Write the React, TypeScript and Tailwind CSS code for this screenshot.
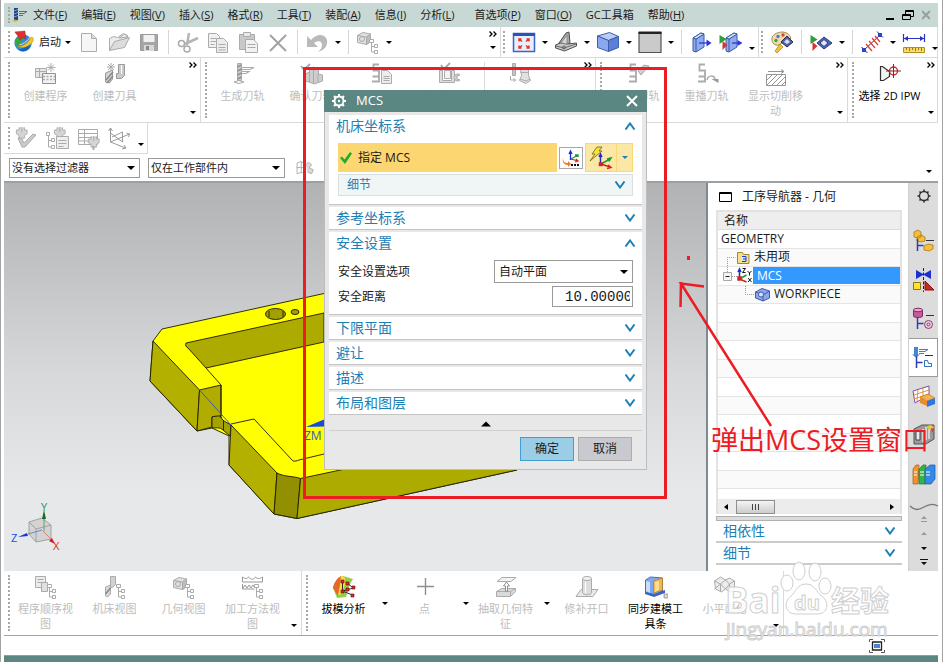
import type { ReactNode } from "react";

type IconProps = { children: ReactNode; size?: string; box?: string };

function Icon({ children, size = "h-6 w-6", box = "0 0 24 24" }: IconProps) {
  return (
    <svg
      className={`${size} shrink-0`}
      viewBox={box}
      fill="none"
      stroke="#ababab"
      strokeWidth="1"
      aria-hidden="true"
    >
      {children}
    </svg>
  );
}

// ---- shared fragments -----------------------------------------------------

const treeMark = (
  <path d="M15.500 12.500v9.500h3M15.500 16.500h3M13.500 9.500h4v3h-4zM18.500 14.500h3v3h-3zM18.500 20.500h3v3h-3z" fill="#fff" />
);

const cubeGray = (
  <>
    <path d="M1.500 5.500L7 2.500l7.500 1.500v7.500l-4 3-9-2z" fill="#e0e0e0" />
    <path d="M1.500 5.500l9 1.500 4-3M10.500 7v7.500" />
    <path d="M10.500 7l4-3v7.500l-4 3z" fill="#bdbdbd" />
    <circle cx="6" cy="9" r="2.500" />
  </>
);

const toolGray = (
  <>
    <path d="M6.500 1.500h4v17h-4z" fill="#cfcfcf" />
    <path d="M6.500 5l4-2M6.500 9l4-2M6.500 13l4-2M6.500 17l4-2" stroke="#8f8f8f" strokeWidth="1.500" />
    <path d="M11 5.500h12l-4 2h-8M11 9.500h7l-3 2h-4" strokeWidth="1.200" />
    <path d="M3 20l5-1.500 5 1.500-5 1.500z" />
  </>
);

const serpentine = <path d="M10 2.500H4.500v6H10v6H3.500M10 14.500v5H3" strokeWidth="1.800" />;

// ---- menu bar and standard toolbar ---------------------------------------

const AppIcon = () => (
  <Icon size="h-4 w-4" box="0 0 16 16">
    <path d="M3 1h4v12H3z" fill="#23407f" stroke="none" />
    <path d="M3 4l4-1.500M3 7l4-1.500M3 10l4-1.500" stroke="#7f9fe0" />
    <path d="M8 4.500h8l-3 2H8M8 8.500h4" stroke="#5d6d75" />
    <path d="M1 13.500l3-1 4 1-4 1.500z" fill="#d6b545" stroke="none" />
  </Icon>
);

const NxLogo = () => (
  <Icon size="h-6 w-[22px]">
    <circle cx="11" cy="13" r="9.500" fill="#2f8be0" stroke="none" />
    <path d="M3 9c3-4 8-5 10-4l-3 5-2 5-4 2z" fill="#35a83a" stroke="none" />
    <path d="M6 20c4 0 9-3 12-7l1 4c-3 5-9 7-13 3z" fill="#1a5fb8" stroke="none" />
    <path d="M5 17c7 0 13-6 14-10 3-1 4 1 3 4-3 5-10 9-17 6z" fill="#f3c22d" stroke="#c38f12" strokeWidth=".5" />
    <path d="M7 15c5-1 10-5 11-8" stroke="#fbe9a0" />
    <path d="M2 1l11-1 1 9-3-2-3 3-3-5z" fill="#dd2f35" stroke="#a31d22" strokeWidth=".5" />
  </Icon>
);

const NewIcon = () => (
  <Icon>
    <path d="M4.500 3.500h10l5 5v13h-15z" fill="#f6f6f6" />
    <path d="M14.500 3.500v5h5" fill="#ddd" />
  </Icon>
);
const OpenIcon = () => (
  <Icon>
    <path d="M2.500 20.500v-12l4-2 4 1 6-4 4 2v4" fill="#ececec" />
    <path d="M2.500 20.500l5-9 15-4-5 10z" fill="#dcdcdc" />
    <path d="M12 8l6-4 2 3z" fill="#f8f8f8" />
  </Icon>
);
const SaveIcon = () => (
  <Icon>
    <path d="M3.500 4.500h17v16h-17z" fill="#a6a6a6" stroke="#9a9a9a" />
    <path d="M6.500 5h11v7h-11z" fill="#f2f2f2" stroke="none" />
    <path d="M7 15h10v6H7z" fill="#d8d8d8" stroke="none" />
    <path d="M9 16h3v4H9z" fill="#8a8a8a" stroke="none" />
  </Icon>
);
const CutIcon = () => (
  <Icon>
    <path d="M13 3l-2 12M22 8l-13 6" stroke="#b5b5b5" strokeWidth="2.500" />
    <circle cx="5.500" cy="13.500" r="3" strokeWidth="1.500" />
    <circle cx="11" cy="19" r="3" strokeWidth="1.500" />
  </Icon>
);
const CopyIcon = () => (
  <Icon>
    <path d="M2.500 3.500h8l3 3v11h-11z" fill="#f2f2f2" />
    <path d="M4.500 8.500h6M4.500 11.500h6M4.500 14.500h4" />
    <path d="M10.500 8.500h7l4 4v10h-11z" fill="#ececec" />
    <path d="M12.500 14.500h7M12.500 17.500h7M12.500 20h7" />
  </Icon>
);
const PasteIcon = () => (
  <Icon>
    <path d="M3.500 4.500h15v15h-15z" fill="#c9c9c9" />
    <path d="M7.500 2.500h7v4h-7z" fill="#e8e8e8" />
    <path d="M9.500 9.500h8l4 4v9h-12z" fill="#f2f2f2" />
    <path d="M11.500 14.500h8M11.500 17.500h8" />
  </Icon>
);
const DeleteIcon = () => (
  <Icon>
    <path d="M4 5l16 16M20 5L4 21" stroke="#a3a3a3" strokeWidth="2" />
  </Icon>
);
const UndoIcon = () => (
  <Icon>
    <path d="M2 6v11h11l-4-4c4-3 8-2 8 2 0 3-2 5-4 7 7-2 10-7 9-12C20 4 12 3 6 10z" fill="#bababa" stroke="none" />
  </Icon>
);
const AssemblyIcon = () => (
  <Icon>
    {cubeGray}
    {treeMark}
  </Icon>
);
const FitIcon = () => (
  <Icon>
    <path d="M1.500 3.500h21v18h-21z" fill="#e8eefb" stroke="#3d62c2" strokeWidth="1.500" />
    <path d="M1 3h22v3H1z" fill="#2c52b8" stroke="none" />
    <path d="M10 11.500l-3-2.500m0 2.500V9h2.500M14 11.500l3-2.500m0 2.500V9h-2.500M10 15.500l-3 2.500m0-2.500V18h2.500M14 15.500l3 2.500m0-2.500V18h-2.500" stroke="#e1321f" strokeWidth="1.400" />
  </Icon>
);
const OrientIcon = () => (
  <Icon>
    <path d="M5 13L12 3l3-1 1 11-4 3-7 1z" fill="#a8a8a8" stroke="#4f4f4f" />
    <path d="M1.500 15l5-2 7 1 9-1v3l-12 5-9-3z" fill="#c8c8c8" stroke="#4f4f4f" />
    <path d="M7 13l6-8v9z" fill="#d6d6d6" stroke="#7b7b7b" strokeWidth=".7" />
    <path d="M2 16l8 2 12-4" stroke="#6a6a6a" />
    <circle cx="10" cy="17.500" r="1.500" fill="#888" stroke="#444" strokeWidth=".6" />
  </Icon>
);
const CubeIcon = () => (
  <Icon>
    <path d="M1.500 6l12-3.500 9 4-10 4z" fill="#b9ccf6" stroke="#3e5cae" />
    <path d="M1.500 6l11 4.500v11l-11-4z" fill="#8ba8ee" stroke="#3e5cae" />
    <path d="M12.500 10.500l10-4v11l-10 4z" fill="#5c7fd8" stroke="#3e5cae" />
  </Icon>
);
const BackgroundIcon = () => (
  <Icon>
    <path d="M1 2.500h22v20H1z" fill="#cacaca" stroke="#565656" strokeWidth="1.200" />
    <path d="M0.500 1.500h23v2.500H.5z" fill="#222" stroke="none" />
  </Icon>
);
const clipBody = (
  <>
    <path d="M4 8l8-5 3 1v13l-8 5-3-1z" fill="#8eabee" stroke="#3d5aa8" />
    <path d="M4 8l3 1v13M7 9l8-5" stroke="#3d5aa8" />
    <path d="M4 8l8-5 3 1-8 5z" fill="#dbe5fb" stroke="#3d5aa8" />
  </>
);
const ClipIcon = () => (
  <Icon>
    {clipBody}
    <path d="M10 13h8" stroke="#2c35d8" strokeWidth="1.300" />
    <path d="M17.500 9.500l5 3.500-5 3.500z" fill="#2c35d8" stroke="none" />
  </Icon>
);
const EditClipIcon = () => (
  <Icon>
    <g transform="translate(3 0)">{clipBody}</g>
    <path d="M0.500 5l7 4-7 5z" fill="#2f9e3d" stroke="none" />
    <path d="M3.500 11l5 4-5 5z" fill="#d33434" stroke="none" />
    <path d="M13 13h7" stroke="#2c35d8" strokeWidth="1.300" />
    <path d="M18.500 10l5 3-5 3z" fill="#2c35d8" stroke="none" />
  </Icon>
);
const PaletteIcon = () => (
  <Icon>
    <path d="M2 10C1 5 7 2 13 2c6 1 9 5 7 9-2 3-5 1-8 2s-3 3-6 2-4-3-4-5z" fill="#efdcae" stroke="#a48a50" />
    <circle cx="8" cy="6.500" r="1.700" fill="#4b77e0" stroke="none" />
    <circle cx="13" cy="5" r="1.700" fill="#e3403a" stroke="none" />
    <circle cx="6" cy="10.500" r="1.700" fill="#38a845" stroke="none" />
    <path d="M5 21l5-7 3 3-6 6z" fill="#f0c13b" stroke="#a3801d" strokeWidth=".7" />
    <path d="M11 12l6-6 6 6-6 5z" fill="#5063a8" stroke="#222c52" />
    <path d="M14 12l3-3 3 3-3 2z" fill="#d7def5" stroke="none" />
  </Icon>
);
const ShowHideIcon = () => (
  <Icon>
    <path d="M1.500 5l7 4.500-7 4.500z" fill="#2f9e3d" stroke="none" />
    <path d="M3.500 12l5 4-5 5z" fill="#d33434" stroke="none" />
    <path d="M8 13l7-6 8 6-8 6z" fill="#4c65b4" stroke="#2c3c72" />
    <path d="M11 13l4-3.500 4 3.500-4 3.500z" fill="#e1e7f8" stroke="#2c3c72" />
  </Icon>
);
const MeasureIcon = () => (
  <Icon>
    <path d="M3 21L21 4" stroke="#3c3c3c" />
    <path d="M6 14l6 7M9 11l6 7M12 8l6 7M15 6l5 6" stroke="#df3b34" strokeWidth="1.200" />
    <path d="M1.500 17l6 6M17 1.500l6 6" stroke="#28286c" />
    <path d="M2 18h4v4H2zM18 3h4v4h-4z" fill="#2c42d2" stroke="none" />
  </Icon>
);
const RulerIcon = () => (
  <Icon>
    <path d="M1.500 4v8M22.500 4v8M2 8.500h20" stroke="#2b2fc4" strokeWidth="1.200" />
    <path d="M2 8.500l4-2.500v5zM22 8.500l-4-2.500v5z" fill="#2b2fc4" stroke="none" />
    <path d="M1.500 17.500h21v5h-21z" fill="#f7dc68" stroke="#b48e1f" />
    <path d="M4.500 18v2M7.500 18v3M10.500 18v2M13.500 18v3M16.500 18v2M19.500 18v3" stroke="#a1741c" />
  </Icon>
);

// ---- manufacturing toolbars ----------------------------------------------

const CreateProgramIcon = () => (
  <Icon>
    <path d="M1.500 6.500h11v9h-11zM1.500 9.500h11M5.500 6.500v9" fill="#e6e6e6" />
    <path d="M8.500 11.500h13v10h-13z" fill="#f2f2f2" stroke="#909090" />
    <path d="M9 14.500h12M9 17.500h12" strokeDasharray="2 1.500" strokeWidth="1.600" />
    <path d="M17 1v9M12.500 5.500h9M14 2.500l6 6M20 2.500l-6 6" />
  </Icon>
);
const CreateToolIcon = () => (
  <Icon>
    <path d="M2.500 11l7-3v9l-3 4-4-1z" fill="#d4d4d4" stroke="#9a9a9a" />
    <path d="M3 18l7-8M4 21l6-7" stroke="#888" strokeWidth="1.500" />
    <path d="M15.500 2.500h6v11l-3 3h-5v-5h2z" fill="#cacaca" stroke="#9a9a9a" />
    <path d="M18.500 3v9" stroke="#fff" />
    <path d="M8 1v8M4 5h8M5 2l6 6M11 2L5 8" />
  </Icon>
);
const GenerateIcon = () => <Icon>{toolGray}</Icon>;
const VerifyIcon = () => (
  <Icon>
    <path d="M1 4l3 4 6-6" strokeWidth="2" />
    <path d="M5.500 12l4-2V6l4-1v4l3-3 2 1v5l4 1v6l-8 3-9-3z" fill="#cdcdcd" />
    <path d="M9.500 10v10M13.500 9v12M18 12v8" />
  </Icon>
);
const ListPathIcon = () => (
  <Icon>
    {serpentine}
    <path d="M12.500 8.500h6l4 4v9h-10z" fill="#ececec" />
    <path d="M14.500 14.500h6M14.500 16.500h6M14.500 18.500h6" />
  </Icon>
);
const MachineIcon = () => (
  <Icon>
    <path d="M3 3l3 4 6-6" strokeWidth="2" />
    <path d="M1.500 8.500h3v10h9v-10h3v12h-15z" fill="#dedede" />
    <path d="M6.500 8.500h6v8h-6z" fill="#f3f3f3" />
    <path d="M22 13a3.500 3.500 0 1 0 0 5l-3-1v-3z" fill="#d0d0d0" />
  </Icon>
);
const PostIcon = () => (
  <Icon>
    <path d="M4.500 1.500h3v12h-3zM2 6.500h8" fill="#c4c4c4" />
    <path d="M2.500 14v4h5M5.500 16l2 2-2 2" />
    <path d="M12.500 7.500h8v6l2 5-5 3-6-3 2-5z" fill="#e1e1e1" />
    <path d="M12.500 10.500h8M12 17l6 2 4-2" />
  </Icon>
);
const SerpentCheckIcon = () => (
  <Icon>
    {serpentine}
    <path d="M12 9l3 4 8-9-5-1z" fill="#cfcfcf" />
  </Icon>
);
const ReplayIcon = () => (
  <Icon>
    {serpentine}
    <path d="M12 18c1-5 7-5 8-1" strokeWidth="1.500" />
    <path d="M16.500 17h7v4z" fill="#999" stroke="none" />
  </Icon>
);
const CutMoveIcon = () => (
  <Icon>
    <path d="M4 9.500h16M17 7.500l3 2-3 2" stroke="#969696" />
    <path d="M2.500 12.500h19v11h-19z" stroke="#969696" />
    <path d="M3 18l5-5M3 23l10-10M8 23l10-10M13 23l8-8M18 23l3-3" stroke="#969696" />
  </Icon>
);
const IpwIcon = () => (
  <Icon>
    <path d="M2.500 4.500h2l7 5v5l-6 4h-3z" fill="#f2f2f2" stroke="#303030" strokeWidth="1.200" />
    <circle cx="15.500" cy="9" r="4" stroke="#cf2e2e" strokeWidth="1.400" />
    <path d="M8 9h15M15.500 2v14" stroke="#8c2323" />
  </Icon>
);

const clampGray = <path d="M4.500 1.500v3h-3v4l3 2v3h6v-3l3-2v-4h-3v-3M7.500 1v6" fill="#d5d5d5" transform="translate(1 0) scale(.9)" />;

const CheckGeomIcon = () => (
  <Icon>
    <path d="M4 12l4 9h3l11-12-3-1-9 9-3-6z" fill="#cacaca" />
    {clampGray}
  </Icon>
);
const TreeGeomIcon = () => (
  <Icon>
    <path d="M1.500 6.500h3v3h-3zM3.500 10v11h3M3.500 14.500h3M6.500 12.500h3v3h-3zM6.500 19.500h3v3h-3z" />
    <g transform="translate(7 0)">{clampGray}</g>
    <path d="M11.500 10.500h12v12h-12z" fill="#eee" />
    <path d="M13.500 14.500h8M13.500 17.500h8M13.500 20.500h5" />
  </Icon>
);
const TableGeomIcon = () => (
  <Icon>
    <path d="M2.500 3.500h19v15h-19zM2.500 7.500h19M2.500 11.500h19M2.500 15h19M8.500 3.500v15" />
    <g transform="translate(10 9)">{clampGray}</g>
    <path d="M17.500 20v4" strokeWidth="2" />
  </Icon>
);
const AxesIcon = () => (
  <Icon>
    <path d="M3.500 2v14l15 6M3.500 16l19-8M3.500 7l12 9V6L5 11" stroke="#9b9b9b" />
    <path d="M1.500 5l2-3 2 3M19.500 7l3 1-1 3M17 19l2 3-4 1" stroke="#9b9b9b" />
  </Icon>
);
const SnapIcon = () => (
  <Icon size="h-5 w-6">
    <path d="M2.500 6l5-2v13l-5 2zM2 11.500h9M7.500 6l4-2v13l-4 1" stroke="#a5a5a5" />
    <path d="M13 8l3-3 4 3-3 4 5 2-2 5-5-2" fill="#d8d8d8" />
  </Icon>
);

// ---- bottom toolbar --------------------------------------------------------

const ProgramViewIcon = () => (
  <Icon>
    <path d="M1.500 1.500h10v11h-10zM3.500 4.500h6M3.500 7.500h4" fill="#ececec" />
    <path d="M7.500 7.500h6v9h-6z" fill="#e0e0e0" />
    {treeMark}
  </Icon>
);
const MachineViewIcon = () => (
  <Icon>
    <path d="M7.500 1.500h5v8l-3 3h-2z" fill="#d2d2d2" />
    <path d="M2.500 12l5-2v9l-3 3-2-1z" fill="#d8d8d8" />
    <path d="M2.500 19l5-6" stroke="#888" strokeWidth="1.500" />
    {treeMark}
  </Icon>
);
const MethodViewIcon = () => (
  <Icon>
    <path d="M1.500 2c3 2 4 2 6 0 3 3 5 3 7 0 2 2 4 2 7 0v5h-20zM1.500 9v5h12M2 13l2-3 2 3 2-3 2 3 2-3 2 3" stroke="#969696" />
    {treeMark}
  </Icon>
);
const DraftIcon = () => (
  <Icon>
    <path d="M1 13C2 7 6 2 11 1l10 3-3 5-4 13-9 1z" fill="#8ed04a" stroke="none" />
    <path d="M1 13C2 8 5 3 9 1l1 9-4 11z" fill="#e8662c" stroke="none" />
    <path d="M9 1c4 0 5 3 4 8l-3 10-4 1 2-10z" fill="#f6dc3c" stroke="none" />
    <path d="M10.500 6v10l11-3-8-6M10.500 16l10 4" stroke="#3a2a2a" />
    <path d="M9 5h3v3H9zM9 15h3v3H9zM20 11h3v3h-3zM14 7h3v3h-3zM14 13h3v3h-3zM19 19h3v3h-3z" fill="#d82828" stroke="#5d1414" strokeWidth=".6" />
  </Icon>
);
const PointIcon = () => (
  <Icon>
    <path d="M12.500 3v17M4 11.500h17" stroke="#8f8f8f" strokeWidth="1.400" />
  </Icon>
);
const ExtractIcon = () => (
  <Icon>
    <path d="M8 2.500h14l-5 4H3z" fill="#f2f2f2" />
    <path d="M2.500 16.500l5-3h14v3l-5 5h-14z" fill="#dadada" />
    <path d="M2.500 16.500h14l5-3M16.500 17v4" />
    <path d="M12.500 7l-3 4h2v5h2v-5h2z" fill="#fff" stroke="#8f8f8f" />
  </Icon>
);
const PatchIcon = () => (
  <Icon>
    <path d="M6 14.500h17l-5 7H1z" fill="#e8e8e8" />
    <path d="M7.500 3.500v14c0 3 9 3 9 0v-14" fill="#ddd" />
    <ellipse cx="12" cy="3.500" rx="4.500" ry="2" fill="#f3f3f3" />
    <path d="M10.500 7v11" stroke="#fff" />
  </Icon>
);
const SyncIcon = () => (
  <Icon>
    <path d="M1.500 5l5-3 12 1v13l-8 4-9-3z" fill="#7fa9ef" stroke="#4a6cb5" />
    <path d="M2 6l4 1v11l-4-2z" fill="#c9dcfa" stroke="none" />
    <path d="M9.500 6l9-3v12l-9 3z" fill="#f6b552" stroke="#b87a20" strokeWidth=".7" />
    <path d="M11 7l4-1v9l-4 2z" fill="#fbe08e" stroke="none" />
    <path d="M1 17l9 2 11-4v3l-11 4-9-3z" fill="#3c62bf" stroke="none" />
    <path d="M20 19h4v4h-4z" fill="#d8d8d8" stroke="#777" strokeWidth=".6" />
  </Icon>
);
const FacetIcon = () => (
  <Icon>
    <path d="M1.500 6l6-4 5 3 4-2 5 3v8l-4 3-5-3-4 3-6-3z" fill="#ededed" />
    <path d="M1.500 6l6 3 5-4 4 4 5-3M7.500 9v8M16.500 9v8M1.500 14l6-5M12.500 14l4-5M7.500 9l5 5" />
  </Icon>
);

// ---- resource bar ----------------------------------------------------------

const branch = <path d="M5.500 10v12M5.500 16.500h6" stroke="#2c3fae" strokeWidth="1.500" />;

const AssemblyNavIcon = () => (
  <Icon>
    <path d="M2 3l4-2 3 2v5l-3 1-4-1zM5 8l4-2 4 2v4l-4 1-4-1z" fill="#f5bf3a" stroke="#a87916" strokeWidth=".8" />
    <path d="M14 11.500h8" stroke="#333" />
    <path d="M12 17l4-2 5 1v4l-4 2-5-1z" fill="#f5bf3a" stroke="#a87916" strokeWidth=".8" />
    {branch}
  </Icon>
);
const ConstraintIcon = () => (
  <Icon>
    <path d="M4 2l8 4.500L4 11zM19 2l-8 4.500L19 11z" fill="#1c2fd0" stroke="none" />
    <path d="M11.500 0v24" stroke="#222" strokeDasharray="3 1.500" />
    <path d="M1.500 14.500h7v7h-7z" fill="#ffe32e" stroke="#8a7510" />
    <path d="M13 13v9h9z" fill="#d02828" stroke="#7d1515" />
  </Icon>
);
const PartNavIcon = () => (
  <Icon>
    <path d="M1.500 3v6c0 2 9 2 9 0V3" fill="#c65a9c" stroke="#7f2a61" />
    <ellipse cx="6" cy="3" rx="4.500" ry="1.800" fill="#eaa8cf" stroke="#7f2a61" />
    <path d="M14 8.500h8" stroke="#333" />
    <circle cx="16.500" cy="17.500" r="4" stroke="#9c2f78" />
    <circle cx="16.500" cy="17.500" r="1.500" stroke="#9c2f78" />
    {branch}
  </Icon>
);
const OperationNavIcon = () => (
  <Icon>
    <path d="M3 1h4v9H3z" fill="#3f86d4" stroke="none" />
    <path d="M1 8.500h8l-4 3z" fill="#3f86d4" stroke="none" />
    <path d="M8 3.500h9l-3 2H8M8 7.500h5" stroke="#4f7cab" />
    <path d="M14 9.500h8" stroke="#333" />
    <path d="M13.500 14.500h3l1 3h3v3h-7z" stroke="#2f6fbd" />
    {branch}
  </Icon>
);
const MachineNavIcon = () => (
  <Icon>
    <path d="M1 6l16-5v9L3 18z" fill="#fff" stroke="#7a4fae" />
    <path d="M2 10l15-5M2 14l15-5M6 5l-1 11M11 3v12" stroke="#e3963a" />
    <path d="M8 12l8-3 7 4-8 3z" fill="#f5b252" stroke="#b26f1a" strokeWidth=".6" />
    <path d="M8 12l7 4v5l-7-3z" fill="#f08a2c" stroke="none" />
    <path d="M15 16l8-3v6l-8 3z" fill="#2f78dd" stroke="none" />
  </Icon>
);
const TemplateIcon = () => (
  <Icon>
    <path d="M2 5l8-4h12v14l-8 5H2z" fill="#9a9a9a" stroke="#555" />
    <path d="M4 7h4v9H4z" fill="#e6ecf5" stroke="#444" />
    <path d="M11 5v13M14 3v13M17 5v10" stroke="#e6e6e6" strokeWidth="1.500" />
    <path d="M14 3l4-2 4 2-3 3z" fill="#f3c534" stroke="none" />
    <path d="M19 4l3 1-2 4z" fill="#d93c2c" stroke="none" />
  </Icon>
);
const ReuseIcon = () => (
  <Icon>
    <path d="M1 6l3-4h3l-1 19H1z" fill="#f2932b" stroke="#a85f10" strokeWidth=".7" />
    <path d="M7 6l4-4h3l-1 19H7z" fill="#37b24a" stroke="#1c7a2a" strokeWidth=".7" />
    <path d="M13 6l5-4h5v14l-4 5h-6z" fill="#3489e6" stroke="#1c58a6" strokeWidth=".7" />
    <path d="M2 9h3M2 12h3M8 9h4M8 12h4M14 9h4M14 12h4" stroke="#fff" />
  </Icon>
);

// ---- small controls ---------------------------------------------------------

const Caret = ({ color = "fill-black" }: { color?: string }) => (
  <svg className={`h-[3px] w-1.5 shrink-0 ${color}`} viewBox="0 0 6 3" aria-hidden="true">
    <path d="M0 0h6L3 3z" />
  </svg>
);

const Chevron = ({ up = false }: { up?: boolean }) => (
  <svg
    className={`h-2 w-3 shrink-0 fill-none stroke-[#1c80b5] stroke-2 ${up ? "rotate-180" : ""}`}
    viewBox="0 0 12 8"
    aria-hidden="true"
  >
    <path d="M1.500 .5L6 6.500l4.500-6" />
  </svg>
);

const Grip = () => (
  <div className="my-1 w-[3px] shrink-0 self-stretch border-l-2 border-dotted border-[#a8a8a8]" />
);

const Divider = () => <div className="mx-px h-6 w-px shrink-0 bg-[#d6d6d6]" />;

function Tool({ label, children }: { label: string; children: ReactNode }) {
  return (
    <button type="button" aria-label={label} className="shrink-0">
      {children}
    </button>
  );
}

function DropTool({ label, low = false }: { label: string; low?: boolean }) {
  return (
    <button
      type="button"
      aria-label={label}
      className={`flex h-6 w-1.5 shrink-0 ${low ? "items-end pb-1" : "items-center"}`}
    >
      <Caret />
    </button>
  );
}

function Overflow({ chevrons = true }: { chevrons?: boolean }) {
  return (
    <button
      type="button"
      aria-label="工具条选项"
      className="ml-auto flex w-3.5 shrink-0 flex-col items-center justify-between self-stretch py-1 pb-2"
    >
      <svg className="h-1.5 w-2 fill-none stroke-black" viewBox="0 0 8 6" strokeWidth="1.300" aria-hidden="true">
        {chevrons && <path d="M.5 .5L3 3 .5 5.500M4.500 .5L7 3 4.500 5.500" />}
      </svg>
      <Caret />
    </button>
  );
}

type BigToolProps = { label: string; icon: ReactNode; enabled?: boolean };

function BigTool({ label, icon, enabled = false }: BigToolProps) {
  return (
    <button
      type="button"
      disabled={!enabled}
      className={`flex w-[69px] shrink-0 flex-col items-center gap-0.5 self-start pt-1 ${
        enabled ? "text-black" : "text-[#bdbdbd]"
      }`}
    >
      {icon}
      <span className="text-center text-[11px] leading-[15px] whitespace-pre">{label}</span>
    </button>
  );
}

type SelectBoxProps = { id: string; label: string; value: string; className: string };

function SelectBox({ id, label, value, className }: SelectBoxProps) {
  return (
    <div className={`relative border border-[#9a9a9a] bg-white ${className}`}>
      <select id={id} aria-label={label} className="h-full w-full appearance-none pr-4 outline-none">
        <option>{value}</option>
      </select>
      <svg className="pointer-events-none absolute top-1/2 right-1 h-1 w-2 -translate-y-1/2" viewBox="0 0 8 4" aria-hidden="true">
        <path d="M0 0h8L4 4z" />
      </svg>
    </div>
  );
}

// ---- page parts -------------------------------------------------------------

const menusLeft = [
  ["文件", "F"],
  ["编辑", "E"],
  ["视图", "V"],
  ["插入", "S"],
  ["格式", "R"],
  ["工具", "T"],
  ["装配", "A"],
  ["信息", "I"],
  ["分析", "L"],
];

const menusRight = [
  ["首选项", "P"],
  ["窗口", "O"],
  ["GC工具箱", ""],
  ["帮助", "H"],
];

function MenuGroup({ items }: { items: string[][] }) {
  return (
    <div className="flex gap-3.5">
      {items.map(([name, key]) => (
        <button type="button" key={name} className="whitespace-nowrap">
          {name}
          {key && (
            <>
              (<u>{key}</u>)
            </>
          )}
        </button>
      ))}
    </div>
  );
}

function MenuBar() {
  return (
    <nav className="mt-[3px] flex h-6 items-center bg-[#c7d8d5] pr-2 pl-1">
      <Grip />
      <AppIcon />
      <div className="ml-1.5 flex gap-5">
        <MenuGroup items={menusLeft} />
        <MenuGroup items={menusRight} />
      </div>
      <div className="ml-auto flex items-center gap-2">
        <button type="button" aria-label="最小化">
          <svg className="h-3 w-2" viewBox="0 0 8 12">
            <path d="M0 9h8v2H0z" />
          </svg>
        </button>
        <button type="button" aria-label="还原">
          <svg className="h-3 w-3 fill-none stroke-black" viewBox="0 0 12 12">
            <path d="M3.500 6V1.500h8v6H8M3.500 2.500h8M.5 5.500h8v5h-8zM.5 6.500h8" />
          </svg>
        </button>
        <button type="button" aria-label="关闭部件">
          <svg className="h-3 w-2 stroke-[#9a9f9e] stroke-2" viewBox="0 0 8 12">
            <path d="M0 2l8 8M8 2l-8 8" />
          </svg>
        </button>
      </div>
    </nav>
  );
}

function StandardToolbar() {
  return (
    <div className="flex h-[31px] border-b border-[#dadada]">
      <div className="flex flex-1 items-center gap-1.5 pl-1">
        <Grip />
        <button type="button" className="-ml-1 flex shrink-0 items-center gap-1">
          <NxLogo />
          启动
          <Caret />
        </button>
        <Tool label="新建"><NewIcon /></Tool>
        <Tool label="打开"><OpenIcon /></Tool>
        <Tool label="保存"><SaveIcon /></Tool>
        <Divider />
        <Tool label="剪切"><CutIcon /></Tool>
        <Tool label="复制"><CopyIcon /></Tool>
        <Tool label="粘贴"><PasteIcon /></Tool>
        <Tool label="删除"><DeleteIcon /></Tool>
        <Divider />
        <Tool label="撤消"><UndoIcon /></Tool>
        <DropTool label="撤消列表" />
        <Divider />
        <Tool label="装配"><AssemblyIcon /></Tool>
        <DropTool label="装配选项" />
        <Overflow />
      </div>
      <div className="flex w-[258px] items-center gap-1.5 border-l border-[#dadada] pl-0.5">
        <Grip />
        <Tool label="适合窗口"><FitIcon /></Tool>
        <DropTool label="适合窗口选项" />
        <Tool label="定向视图"><OrientIcon /></Tool>
        <DropTool label="定向视图选项" />
        <Tool label="着色"><CubeIcon /></Tool>
        <DropTool label="渲染样式" />
        <Tool label="背景"><BackgroundIcon /></Tool>
        <DropTool label="背景选项" />
        <Divider />
        <Tool label="剪切截面"><ClipIcon /></Tool>
        <Tool label="编辑截面"><EditClipIcon /></Tool>
        <DropTool label="截面选项" low />
      </div>
      <div className="flex w-[180px] items-center gap-1.5 border-x border-[#dadada] pl-0.5">
        <Grip />
        <Tool label="编辑对象显示"><PaletteIcon /></Tool>
        <Divider />
        <Tool label="显示和隐藏"><ShowHideIcon /></Tool>
        <DropTool label="显示选项" />
        <Divider />
        <Tool label="测量距离"><MeasureIcon /></Tool>
        <DropTool label="测量选项" />
        <Tool label="简单测量"><RulerIcon /></Tool>
        <DropTool label="更多测量" low />
      </div>
    </div>
  );
}

function OperationToolbar() {
  return (
    <div className="flex h-[65px] border-b border-[#dadada]">
      <div className="flex w-[197px] border-r border-[#dadada] pl-1">
        <Grip />
        <BigTool label="创建程序" icon={<CreateProgramIcon />} />
        <BigTool label="创建刀具" icon={<CreateToolIcon />} />
        <Overflow />
      </div>
      <div className="flex flex-1 border-r border-[#dadada] pl-1">
        <Grip />
        <BigTool label="生成刀轨" icon={<GenerateIcon />} />
        <BigTool label="确认刀轨" icon={<VerifyIcon />} />
        <BigTool label="列出刀轨" icon={<ListPathIcon />} />
        <BigTool label="机床仿真" icon={<MachineIcon />} />
        <div className="my-1 w-px bg-[#dadada]" />
        <BigTool label="后处理" icon={<PostIcon />} />
        <Overflow />
      </div>
      <div className="flex w-[252px] border-r border-[#dadada] pl-1">
        <Grip />
        <BigTool label="编辑刀轨" icon={<SerpentCheckIcon />} />
        <BigTool label="重播刀轨" icon={<ReplayIcon />} />
        <BigTool label={"显示切削移\n动"} icon={<CutMoveIcon />} />
        <Overflow />
      </div>
      <div className="flex w-[90px] border-r border-[#dadada] pl-1">
        <Grip />
        <BigTool label="选择 2D IPW" icon={<IpwIcon />} enabled />
        <Overflow />
      </div>
    </div>
  );
}

function GeometryToolbar() {
  return (
    <div className="flex h-[31px] w-36 items-center gap-[7px] border-r border-b border-[#dadada] pl-1">
      <Grip />
      <div className="-ml-1 flex items-center gap-[7px]">
        <Tool label="检查几何体"><CheckGeomIcon /></Tool>
        <Tool label="几何体树"><TreeGeomIcon /></Tool>
        <Tool label="几何体列表"><TableGeomIcon /></Tool>
        <Tool label="坐标系"><AxesIcon /></Tool>
        <DropTool label="几何体选项" low />
      </div>
    </div>
  );
}

function SelectionBar() {
  return (
    <div className="flex h-[29px] items-center gap-2 border-b-2 border-[#9aa0a3] pr-1.5 pl-[5px]">
      <SelectBox id="type-filter" label="类型过滤器" value="没有选择过滤器" className="h-5 w-[131px] pl-0.5" />
      <SelectBox id="scope-filter" label="选择范围" value="仅在工作部件内" className="h-5 w-[137px] pl-0.5" />
      <SnapIcon />
      <div className="ml-auto flex self-end pb-2">
        <Caret />
      </div>
    </div>
  );
}

function Viewport() {
  return (
    <main className="relative min-w-0 flex-1 overflow-hidden bg-linear-to-b from-[#b1b2b4] via-[#d8d9db] via-50% to-[#e6e8ea] to-80%">
      <svg className="absolute top-0 left-0 h-[388px] w-[702px]" viewBox="4 183 702 388" strokeLinejoin="round">
        <g stroke="#1c1c00" strokeWidth=".9">
          <path d="M162 329L324 293.500 500 255l40 175-23 40-220 48.500-23-4.500-45-49v-29l-17-8-15 3-47-50 3-40z" fill="#ff0" />
          <path d="M153 341l46.500 49-2.500 41-47-50z" fill="#b3b000" />
          <path d="M199.500 390l21.500-5v31l-9 1v10l-15 4z" fill="#b0ad00" />
          <path d="M212 417c2-1 6-1 8-1 2 2 2 4 4 5l7 4-1 11-7-6c-3-3-7-2-11-2z" fill="#a5a200" />
          <path d="M223.500 420v10" fill="none" />
          <path d="M231 425l46 48-3 41-45-49z" fill="#b3b000" />
          <path d="M277 473c7 4 17 3 23.500 5.500l-3.500 40-23-4.500z" fill="#928f00" />
          <path d="M300.500 478.500L345 469l195-39-23 40-220 48.500z" fill="#adaa00" />
          <path d="M186 343l138-30v29l-118 26-18-20c-2-1-3-3-2-5z" fill="#adaa00" />
          <path d="M206 368l15 17v33M231 424l23-5 38 41c1 2 5 1 7 0l25-6" fill="none" />
          <path d="M199.500 390l31.500 35" stroke="#2e4fe0" />
          <ellipse cx="275.500" cy="314" rx="10" ry="5.500" fill="#a29f00" />
          <path d="M269 311v6M283 311v6" />
          <ellipse cx="295" cy="312" rx="4" ry="2.500" fill="#a29f00" />
        </g>
        <path d="M306 427l18-7.500v7z" fill="#1846e8" />
        <text x="304" y="440" className="fill-[#3456c8] text-xs">
          ZM
        </text>
        <g stroke="#a2a2a2">
          <path d="M29 522l13-4 9 7v14l-15 3-7-8z" fill="#cacaca" fillOpacity=".7" />
          <path d="M29 522l7 7v13M36 529l15-4" fill="none" />
          <path d="M44 518v13" stroke="#64a064" />
          <path d="M42 530l-14 4" stroke="#6c86d2" />
          <path d="M43 531l8 8" stroke="#d28080" />
        </g>
        <path d="M44 510l2 9h-4z" fill="#156b1f" />
        <path d="M18 537l9-4 1 3z" fill="#1638d8" />
        <path d="M55 544l-6-3 3-3z" fill="#c41f1f" />
        <g className="text-[11px]">
          <text x="41" y="511" className="fill-[#2a9a3a]">Y</text>
          <text x="11" y="542" className="fill-[#1c48e8]">Z</text>
          <text x="53" y="550" className="fill-[#d42a2a]">X</text>
        </g>
      </svg>
    </main>
  );
}

const emptyRows = Array.from({ length: 10 }, (_, i) => i);

function Navigator() {
  return (
    <aside className="flex w-[202px] shrink-0 flex-col border-l-2 border-[#808a8e] bg-white pr-1.5 pl-2">
      <h2 className="flex h-[27px] items-center gap-2.5 pl-[3px] text-xs">
        <svg className="h-3 w-[13px] fill-none stroke-black" viewBox="0 0 13 12" aria-hidden="true">
          <path d="M.5 1.500h12v9H.5zM.5 2.500h12" />
        </svg>
        工序导航器 - 几何
      </h2>
      <div className="flex flex-col border-2 border-b-0 border-[#e2e2e2]">
        <table className="h-[277px] w-full border-separate border-spacing-0 text-xs leading-4 [&_td]:h-[18px] [&_td]:border-b [&_td]:border-[#e4e4e4] [&_td]:p-0 [&_th]:h-[18px]">
          <thead>
            <tr className="bg-[#eee]">
              <th scope="col" className="border-b border-[#dcdcdc] p-0 pl-1.5 text-left font-normal">
                名称
              </th>
            </tr>
          </thead>
          <tbody>
            <tr>
              <td>
                <span className="pl-[3px]">GEOMETRY</span>
              </td>
            </tr>
            <tr className="bg-[#fafafa]">
              <td>
                <div className="flex items-center gap-1 pl-2">
                  <svg className="h-[17px] w-6" viewBox="0 0 24 17" fill="none">
                    <path d="M1.500 17V8.500h8" stroke="#999" strokeDasharray="1 1" />
                    <path d="M11.500 14.500v-11h5l1 2h5.500v9z" fill="#f7e08a" stroke="#a38630" />
                    <path d="M15.500 7h5v6h-5z" fill="#dfe6fb" />
                    <path d="M16 7.500h4v5h-4M17 10h3" stroke="#2438c8" />
                  </svg>
                  未用项
                </div>
              </td>
            </tr>
            <tr>
              <td>
                <div className="flex items-center pl-1">
                  <svg className="h-[17px] w-[31px]" viewBox="0 0 31 17" fill="none">
                    <path d="M5.500 0v5M10 9.500h5" stroke="#999" strokeDasharray="1 1" />
                    <path d="M1.500 5.500h8v8h-8z" fill="#f4f4f4" stroke="#a8a8a8" />
                    <path d="M3.500 9.500h4" stroke="#222" />
                    <path d="M17.500 12V3M16 5l1.500-3L19 5" stroke="#1b2fcf" strokeWidth="1.500" />
                    <path d="M17.500 12l7-4" stroke="#189a35" strokeWidth="1.500" />
                    <path d="M17.500 12l7 3M16 10h3v3h-3z" fill="#d22" stroke="#d22222" strokeWidth="1.500" />
                    <path d="M20.500 1.500h3l-3 4h3M25.500 4l2 2 2-2M27.500 6v2.500M26 11l3.500 4M29.500 11L26 15" stroke="#111" />
                  </svg>
                  <span className="flex-1 bg-[#3399ff] pl-1 leading-[17px] text-white">MCS</span>
                </div>
              </td>
            </tr>
            <tr className="bg-[#fafafa]">
              <td>
                <div className="flex items-center gap-1 pl-[26px]">
                  <svg className="h-[17px] w-[26px]" viewBox="0 0 26 17" fill="none">
                    <path d="M1.500 0v8.500h9" stroke="#999" strokeDasharray="1 1" />
                    <path d="M11.500 6L18 2.500 25.500 5v7L19 15l-7.500-3z" fill="#8fa5ec" stroke="#4058b0" />
                    <path d="M11.500 6l7.500 3 6.500-4M19 9v6" stroke="#4058b0" />
                    <circle cx="17" cy="8.500" r="2.500" fill="#dfe6fb" stroke="#4058b0" />
                  </svg>
                  WORKPIECE
                </div>
              </td>
            </tr>
            {emptyRows.map((i) => (
              <tr key={i} className="even:bg-[#fafafa]">
                <td />
              </tr>
            ))}
          </tbody>
        </table>
        <div className="mt-2.5 flex h-[15px] items-center gap-2 bg-[#ececec] px-1.5">
          <button type="button" aria-label="向左滚动">
            <svg className="h-1.5 w-1" viewBox="0 0 4 6"><path d="M4 0v6L0 3z" /></svg>
          </button>
          <div className="flex h-3.5 w-[39px] items-center justify-center gap-0.5 border border-[#8f8f8f] bg-linear-to-b from-[#f4f4f4] to-[#cdcdcd]">
            <i className="h-1.5 w-px bg-[#444]" />
            <i className="h-1.5 w-px bg-[#444]" />
            <i className="h-1.5 w-px bg-[#444]" />
          </div>
          <button type="button" aria-label="向右滚动" className="ml-auto">
            <svg className="h-1.5 w-1" viewBox="0 0 4 6"><path d="M0 0v6l4-3z" /></svg>
          </button>
        </div>
      </div>
      <div className="mt-0.5 h-[5px] shrink-0 border border-[#b0b0b0] bg-[#dcdcdc]" />
      {["相依性", "细节"].map((name) => (
        <button
          type="button"
          key={name}
          className="flex h-[22px] shrink-0 items-center justify-between border-b-2 border-[#cbcbcb] pr-1.5 pl-[7px] text-sm text-[#1c80b5]"
        >
          {name}
          <Chevron />
        </button>
      ))}
    </aside>
  );
}

const resourceTabs = [
  { name: "装配导航器", icon: <AssemblyNavIcon /> },
  { name: "约束导航器", icon: <ConstraintIcon /> },
  { name: "部件导航器", icon: <PartNavIcon /> },
  { name: "工序导航器", icon: <OperationNavIcon />, active: true },
  { name: "机床导航器", icon: <MachineNavIcon /> },
  { name: "加工模板", icon: <TemplateIcon /> },
  { name: "重用库", icon: <ReuseIcon /> },
];

function ResourceBar() {
  return (
    <div className="flex w-[30px] shrink-0 flex-col items-center border-l border-[#d0d0d0] bg-[#dcdcdc]">
      <button type="button" aria-label="资源条选项" className="mt-1.5 mb-[18px]">
        <svg className="h-3.5 w-3.5 fill-none stroke-[#2e2e2e]" viewBox="0 0 14 14">
          <circle cx="7" cy="7" r="4.500" strokeWidth="1.300" />
          <path d="M7 .5V3M7 11v2.500M.5 7H3M11 7h2.500M2.500 2.500L4 4M10 10l1.500 1.500M11.500 2.500L10 4M4 10l-1.500 1.500" strokeWidth="1.600" />
        </svg>
      </button>
      {resourceTabs.map(({ name, icon, active }) => (
        <button
          type="button"
          key={name}
          aria-label={name}
          className={`flex h-[39px] w-full items-center justify-center ${
            active ? "border border-l-0 border-[#9b9b9b] bg-white" : ""
          }`}
        >
          {icon}
        </button>
      ))}
      <svg className="h-[76px] w-[30px]" viewBox="0 0 30 76" fill="none">
        <path d="M1 12c5 5 9 4 14 1s9-4 14-1" stroke="#777" strokeWidth="1.300" />
        <path d="M12 25h6l-3-3zM12 27h6v1h-6zM12 41h6l-3-3z" fill="#999" />
        <path d="M12 53h6l-3 3zM11 65h8v1h-8zM12 68h6l-3 3z" fill="#111" />
      </svg>
    </div>
  );
}

function BottomToolbar() {
  return (
    <div className="flex h-[65px] border-b border-[#a3a3a3]">
      <div className="flex w-[298px] border-r border-[#dadada] pl-1">
        <Grip />
        <BigTool label={"程序顺序视\n图"} icon={<ProgramViewIcon />} />
        <BigTool label="机床视图" icon={<MachineViewIcon />} />
        <BigTool label="几何视图" icon={<AssemblyIcon />} />
        <BigTool label={"加工方法视\n图"} icon={<MethodViewIcon />} />
        <Overflow chevrons={false} />
      </div>
      <div className="flex w-[482px] items-center border-r border-[#dadada] pl-1">
        <Grip />
        <BigTool label="拔模分析" icon={<DraftIcon />} enabled />
        <span className="w-3 pl-1"><Caret /></span>
        <BigTool label="点" icon={<PointIcon />} />
        <span className="w-3 pl-1"><Caret /></span>
        <BigTool label={"抽取几何特\n征"} icon={<ExtractIcon />} />
        <span className="w-3 pl-1"><Caret /></span>
        <BigTool label="修补开口" icon={<PatchIcon />} />
        <BigTool label={"同步建模工\n具条"} icon={<SyncIcon />} enabled />
        <BigTool label="小平面化" icon={<FacetIcon />} />
        <Overflow chevrons={false} />
      </div>
    </div>
  );
}

function StatusBar() {
  return (
    <footer>
      <div className="flex h-[19px] items-center justify-end pr-[53px]">
        <button type="button" aria-label="全屏">
          <svg className="h-3.5 w-4" viewBox="0 0 16 14" fill="none">
            <path d="M.5 3V.5H4M12 .5h3.500V3M.5 11v2.500H4M12 13.500h3.500V11" stroke="#555" />
            <path d="M3.500 3h9v8h-9z" fill="#fff" stroke="#222" strokeWidth="1.300" />
            <path d="M5 5h6v4H5z" fill="#4a86cc" />
          </svg>
        </button>
      </div>
      <div className="h-[7px] border-t border-[#9a9a9a] bg-[#5b8782]" />
    </footer>
  );
}

// ---- MCS dialog ---------------------------------------------------------------

type SectionProps = { title: string; children?: ReactNode };

function Section({ title, children }: SectionProps) {
  return (
    <section className="border-b border-[#c4c4c4] bg-white">
      <button
        type="button"
        className="flex h-[22px] w-full items-center justify-between pr-1.5 pl-[7px] text-sm text-[#1c80b5]"
      >
        {title}
        <Chevron up={!!children} />
      </button>
      {children}
    </section>
  );
}

function McsDialog() {
  return (
    <div
      role="dialog"
      aria-label="MCS"
      className="absolute top-[90px] left-[323px] w-[323px] border border-t-0 border-[#bdbdbd] bg-[#e8e8e8] pb-2 text-xs"
    >
      <header className="-mx-px flex h-[22px] items-center bg-[#5b8782] pr-2 pl-2 text-[13px] text-white">
        <svg className="h-3.5 w-3.5 fill-none stroke-white" viewBox="0 0 14 14" aria-hidden="true">
          <circle cx="7" cy="7" r="4.500" strokeWidth="2" />
          <path d="M7 0v2M7 12v2M0 7h2M12 7h2M2 2l1.500 1.500M10.500 10.500L12 12M12 2l-1.500 1.500M3.500 10.500L2 12" strokeWidth="2" />
          <circle cx="7" cy="7" r="1.200" fill="#fff" stroke="none" />
        </svg>
        <span className="ml-2.5">MCS</span>
        <button type="button" aria-label="关闭" className="ml-auto">
          <svg className="h-3 w-3.5 stroke-white stroke-2" viewBox="0 0 14 12">
            <path d="M2 1l10 10M12 1L2 11" />
          </svg>
        </button>
      </header>
      <div className="flex flex-col gap-0.5 px-1 pt-[3px]">
        <Section title="机床坐标系">
          <div className="flex flex-col gap-0.5 px-[9px] pt-1.5 pb-2">
            <div className="flex h-[29px] items-center gap-0.5">
              <div className="flex h-full flex-1 items-center gap-1.5 bg-[#fcd670] pl-0.5">
                <svg className="h-3 w-3" viewBox="0 0 12 12" aria-hidden="true">
                  <path d="M0 6l2-1.500 2.500 3L10 0l2 1.500L5 12z" fill="#1fae2c" />
                </svg>
                指定 MCS
              </div>
              <button type="button" aria-label="坐标系对话框" className="border border-[#a8a8a8] bg-white">
                <svg className="h-5 w-[22px]" viewBox="0 0 22 20" fill="none" strokeWidth="1.300">
                  <path d="M10.500 12V4M9 6l1.500-3L12 6" stroke="#1b2fcf" />
                  <path d="M11 11l7-4M15 7h3v2" stroke="#189a35" />
                  <path d="M11 11l7 2M16 11l2 2-3 1" stroke="#d22" />
                  <path d="M3 10c0 4 2 5 5 5v-2l3 3-3 3v-2c-4 0-6-3-5-7z" fill="#ee7a24" />
                  <path d="M11 16h2v2h-2zM14 16h2v2h-2zM17 16h2v2h-2z" fill="#111" />
                </svg>
              </button>
              <div className="flex h-full w-12 border border-[#fcd670] bg-[#fbe8a6]">
                <button type="button" aria-label="自动判断" className="flex flex-1 items-center justify-center">
                  <svg className="h-6 w-6" viewBox="0 0 24 24" fill="none" strokeWidth="1.500">
                    <path d="M8 1h5l-3 4h3L1 15l5-7H3z" fill="#f8e23a" stroke="#6d6218" strokeWidth=".8" />
                    <path d="M11.500 18V9M10 11l1.500-3 1.500 3" stroke="#1b2fcf" />
                    <path d="M12 18l9-5M18 13l4-1-2 3.500" stroke="#189a35" />
                    <path d="M12 18l9 3M10.500 17h2.500v2.500h-2.500z" fill="#d22" stroke="#d22222" />
                    <path d="M19 19l3 2.500-4 1" stroke="#d22222" />
                  </svg>
                </button>
                <button
                  type="button"
                  aria-label="坐标系类型"
                  className="flex w-4 items-center justify-center border-l border-[#fcd670]"
                >
                  <Caret color="fill-[#1c80b5]" />
                </button>
              </div>
            </div>
            <button
              type="button"
              className="flex h-[22px] items-center justify-between border border-[#dcdfe0] bg-[#f0f5f6] pr-1.5 pl-2 text-[#1c80b5]"
            >
              细节
              <Chevron />
            </button>
          </div>
        </Section>
        <Section title="参考坐标系" />
        <Section title="安全设置">
          <div className="flex flex-col gap-[3px] px-[9px] pt-1.5 pb-[7px]">
            <div className="flex items-center justify-between">
              <label htmlFor="safe-option">安全设置选项</label>
              <SelectBox id="safe-option" label="安全设置选项" value="自动平面" className="h-[23px] w-[139px] pl-1" />
            </div>
            <div className="flex items-center justify-between">
              <label htmlFor="safe-distance">安全距离</label>
              <input
                id="safe-distance"
                defaultValue="10.00000"
                className="h-[21px] w-[81px] border border-[#9a9a9a] bg-white pr-0.5 pl-3 text-sm [font-family:'Liberation_Mono',monospace] outline-none"
              />
            </div>
          </div>
        </Section>
        <Section title="下限平面" />
        <Section title="避让" />
        <Section title="描述" />
        <Section title="布局和图层" />
        <button type="button" aria-label="折叠" className="flex h-3.5 items-center justify-center border-b border-[#d0d0d0]">
          <svg className="h-1.5 w-2.5" viewBox="0 0 10 6">
            <path d="M0 5.500h10L5 .5z" />
          </svg>
        </button>
        <div className="mt-1 flex justify-end gap-1 pr-2.5">
          <button type="button" className="h-6 w-[54px] border border-[#3f9fd0] bg-[#9bcde6]">
            确定
          </button>
          <button type="button" className="h-6 w-[54px] border border-[#adadad] bg-[#c9cacf]">
            取消
          </button>
        </div>
      </div>
    </div>
  );
}

function Annotations() {
  return (
    <>
      <div className="pointer-events-none absolute top-[67px] left-[302px] h-[432px] w-[364px] border-[3px] border-[#ed1c24]" />
      <svg
        className="pointer-events-none absolute top-[250px] left-[671px] h-[180px] w-[104px] fill-none stroke-[#ed1c24]"
        viewBox="672 250 104 180"
        strokeWidth="2.500"
        aria-hidden="true"
      >
        <path d="M771 426L681 283.500l23 3M681 282l-.5 25" />
        <path d="M687 256h3v4h-3z" fill="#ed1c24" stroke="none" />
      </svg>
      <p className="pointer-events-none absolute top-[424px] left-[710px] text-[27px] leading-8 whitespace-nowrap text-[#ed1c24]">
        弹出MCS设置窗口
      </p>
    </>
  );
}

function Watermark() {
  return (
    <svg
      className="pointer-events-none absolute top-[556px] left-[715px] h-[90px] w-[190px]"
      viewBox="716 556 190 90"
      fill="#fff"
      fillOpacity=".85"
      stroke="#cfcfcf"
      strokeWidth="1"
    >
      <text x="725" y="613" className="text-[35px] font-bold">Bai</text>
      <ellipse cx="799" cy="571" rx="6" ry="9" />
      <ellipse cx="815" cy="572" rx="6" ry="9" />
      <ellipse cx="787" cy="583" rx="6" ry="8" />
      <ellipse cx="825" cy="586" rx="6" ry="8" />
      <path d="M806 584c-9 0-10 8-15 12-8 6-6 18 5 18h21c11 0 13-11 5-18-6-4-7-12-16-12z" />
      <text x="794" y="610" className="text-[20px] font-bold">du</text>
      <text x="831" y="612" className="text-[29px] font-bold">经验</text>
      <text x="726" y="636" className="text-[19px]">jingyan.baidu.com</text>
    </svg>
  );
}

export default function App() {
  return (
    <div className="relative flex min-h-screen w-full flex-col overflow-hidden border-x border-[#a3a3a3] bg-white pr-1 pl-[3px] text-[11px] leading-4 text-[#1a1a1a] [font-family:'Open_Sans','Noto_Sans_CJK_SC',sans-serif]">
      <MenuBar />
      <StandardToolbar />
      <OperationToolbar />
      <GeometryToolbar />
      <SelectionBar />
      <div className="flex min-h-[387px] flex-1">
        <Viewport />
        <Navigator />
        <ResourceBar />
      </div>
      <BottomToolbar />
      <StatusBar />
      <McsDialog />
      <Watermark />
      <Annotations />
    </div>
  );
}
